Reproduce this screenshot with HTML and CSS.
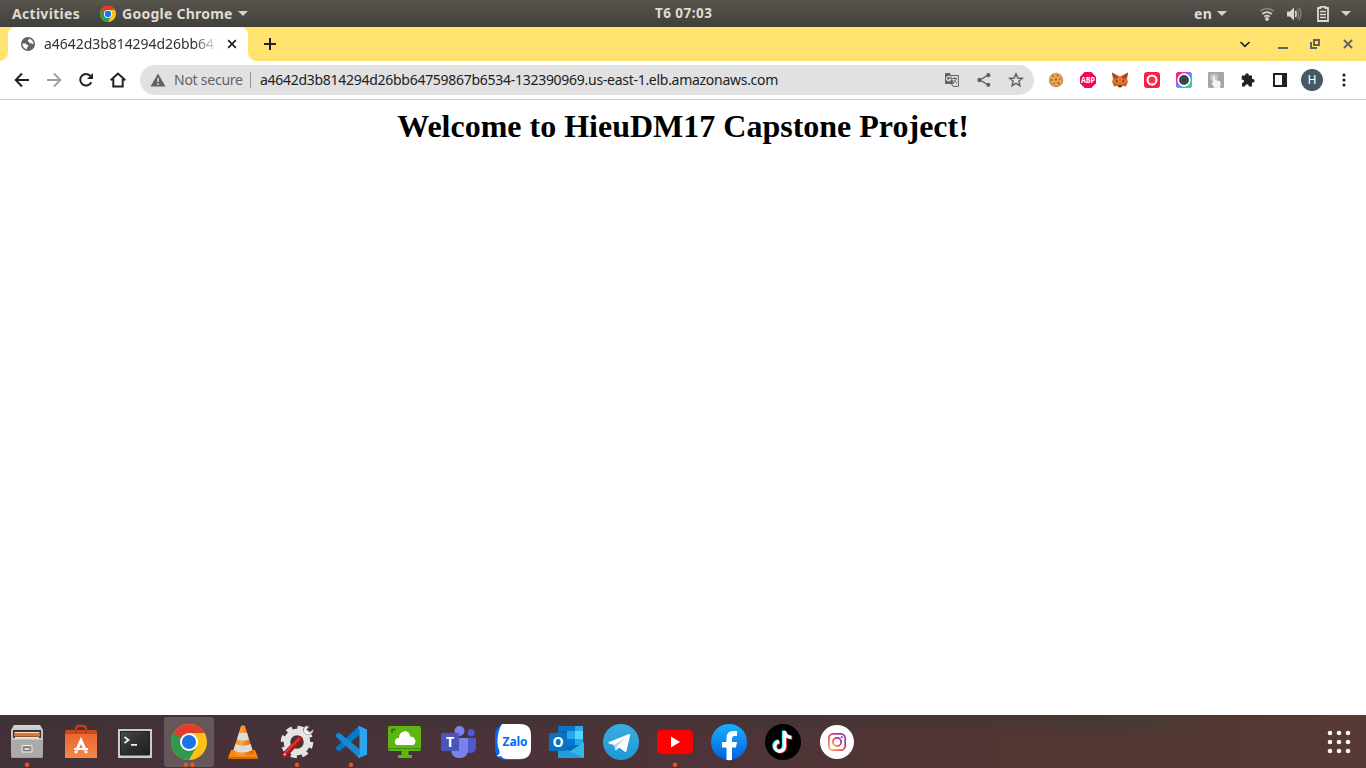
FILE: index.html
```html
<!DOCTYPE html>
<html lang="en">
<head>
<meta charset="utf-8">
<title>Desktop</title>
<link rel="stylesheet" href="styles.css">
</head>
<body>
<svg class="defs" aria-hidden="true">
  <defs>
    <symbol id="chrome" viewBox="0 0 36 36">
      <circle cx="18" cy="18" r="18" fill="#fbc116"/>
      <path d="M18 18 2.4 9A18 18 0 0 0 18 36L25.8 22.5Z" fill="#30994c"/>
      <path d="M2.4 9A18 18 0 0 1 33.6 9H18L10.2 22.5Z" fill="#e33b2e"/>
      <path d="M18 18 2.4 9 10.2 22.5Z" fill="#30994c"/>
      <circle cx="18" cy="18" r="9" fill="#fff"/>
      <circle cx="18" cy="18" r="7.1" fill="#1a73e8"/>
    </symbol>
    <linearGradient id="silver" x2="0" y2="1"><stop stop-color="#d2d2d2"/><stop offset="1" stop-color="#9b9b9b"/></linearGradient>
    <linearGradient id="orange" x2="0" y2="1"><stop stop-color="#e5622a"/><stop offset="1" stop-color="#f4884c"/></linearGradient>
    <linearGradient id="screen" x2="1" y2="1"><stop stop-color="#4b4b4b"/><stop offset=".5" stop-color="#303030"/><stop offset="1" stop-color="#1f1f1f"/></linearGradient>
    <linearGradient id="fb" x2="0" y2="1"><stop stop-color="#19afff"/><stop offset="1" stop-color="#0062e0"/></linearGradient>
    <linearGradient id="tg" x2="0" y2="1"><stop stop-color="#37aee2"/><stop offset="1" stop-color="#2298d4"/></linearGradient>
    <linearGradient id="insta" x1="0" y1="1" x2="1" y2="0"><stop stop-color="#fdb94a"/><stop offset=".45" stop-color="#e23a5c"/><stop offset="1" stop-color="#8134c6"/></linearGradient>
    <linearGradient id="rainbow" x2="1" y2="1"><stop stop-color="#ff2020"/><stop offset=".3" stop-color="#f02bd0"/><stop offset=".6" stop-color="#20b8ff"/><stop offset="1" stop-color="#45e04a"/></linearGradient>
    <linearGradient id="cone" x2="1"><stop stop-color="#f58a1c"/><stop offset=".4" stop-color="#ffa044"/><stop offset="1" stop-color="#d75f00"/></linearGradient>
  </defs>
</svg>

<header class="topbar">
  <span class="activities">Activities</span>
  <svg class="top-chrome"><use href="#chrome"/></svg>
  <span class="app-name">Google Chrome</span>
  <i class="caret"></i>
  <span class="clock">T6 07:03</span>
  <div class="tray">
    <span class="lang">en</span><i class="caret"></i>
    <svg class="wifi" width="16" height="16" viewBox="0 0 16 16" fill="none" stroke-width="1.7"><path d="M1.3 5.2Q8 .1 14.7 5.2" stroke="#85827c"/><path d="M3.3 8Q8 4.4 12.7 8M5.2 10.7Q8 8.5 10.8 10.7" stroke="#d5d3cf"/><circle cx="8" cy="13" r="1.9" fill="#d5d3cf"/></svg>
    <svg class="sound" width="16" height="16" viewBox="0 0 16 16" fill="none"><path d="M1 5.5H4L8 1.5V14.5L4 10.5H1Z" fill="#dad8d4"/><path d="M9.3 5Q11 8 9.3 11" stroke="#dad8d4" stroke-width="1.6"/><path d="M11 3Q14 8 11 13M13 1.6Q17 8 13 14.4" stroke="#85827c" stroke-width="1.4"/></svg>
    <svg class="battery" width="12" height="16" viewBox="0 0 12 16"><path d="M3.5 2V.8H8.500V2H11V15H1V2Z" fill="none" stroke="#dad8d4" stroke-width="1.8"/><path d="M3 5.5H9M3 8.500H9M3 11.500H9" stroke="#dad8d4" stroke-width="1.6"/></svg>
    <i class="caret"></i>
  </div>
</header>

<section class="tabstrip">
  <div class="tab">
    <svg class="globe" width="14" height="14" viewBox="0 0 14 14"><circle cx="7" cy="7" r="7" fill="#5f6368"/><path d="M1.500 6.500H4.500C5.500 6.500 5.200 8 6.500 8C8 8 7.700 9.500 6.500 9.800C6 10 6.500 11 5.800 12.300C3 11.700 1.300 9.500 1.500 6.500ZM8.300 1.700C7.800 3 6.700 2.600 6.800 4C7 5 8.300 4.500 8.300 5.500C8.500 6.500 9.500 6.300 10.300 6.300C11 6.400 11.500 7.300 12.500 7.300C12.500 4.300 10.800 2.300 8.300 1.700Z" fill="#fff"/></svg>
    <span class="tab-title">a4642d3b814294d26bb647</span>
    <svg class="close" width="10" height="10" viewBox="0 0 10 10"><path d="M1.200 1.200 8.800 8.800M8.800 1.200 1.200 8.800" stroke="#202124" stroke-width="1.7"/></svg>
  </div>
  <svg class="newtab" width="12" height="12" viewBox="0 0 12 12"><path d="M6 0V12M0 6H12" stroke="#202124" stroke-width="2"/></svg>
  <div class="window-controls">
    <svg width="12" height="12" viewBox="0 0 12 12"><path d="M1.500 4 6 8.300 10.500 4" fill="none" stroke="#202124" stroke-width="1.7"/></svg>
    <svg width="12" height="12" viewBox="0 0 12 12"><path d="M1 10H11" stroke="#5f6368" stroke-width="2"/></svg>
    <svg width="12" height="12" viewBox="0 0 12 12"><path d="M5 2H10V7H5ZM2 4V10H8" fill="none" stroke="#5f6368" stroke-width="2"/></svg>
    <svg width="12" height="12" viewBox="0 0 12 12"><path d="M2 2 10 10M10 2 2 10" stroke="#5f6368" stroke-width="1.900"/></svg>
  </div>
</section>

<nav class="toolbar">
  <div class="nav-buttons">
    <svg viewBox="0 0 16 16"><path d="M15 8H2M8 1.500 1.700 8 8 14.500" fill="none" stroke="#202124" stroke-width="2"/></svg>
    <svg viewBox="0 0 16 16"><path d="M1 8H14M8 1.500 14.300 8 8 14.500" fill="none" stroke="#9d9d9d" stroke-width="1.900"/></svg>
    <svg viewBox="0 0 16 16"><path d="M13.300 10.200A5.800 5.800 0 1 1 12.500 4" fill="none" stroke="#202124" stroke-width="2"/><path d="M15 1V7H9Z" fill="#202124"/></svg>
    <svg viewBox="0 0 16 16"><path d="M.7 8.300 8 1.500 15.300 8.300M3.300 7V14.500H12.700V7" fill="none" stroke="#202124" stroke-width="2"/></svg>
  </div>
  <div class="omnibox">
    <svg class="warn" width="16" height="14" viewBox="0 0 16 14"><path d="M8 .5 15.500 13.500H.5Z" fill="#5f6368"/><path d="M8 5V9M8 10.300V12" stroke="#e1e1e1" stroke-width="1.500"/></svg>
    <span class="secure">Not secure</span>
    <span class="divider"></span>
    <span class="url">a4642d3b814294d26bb64759867b6534-132390969.us-east-1.elb.amazonaws.com</span>
    <div class="page-actions">
      <svg viewBox="0 0 16 16"><path d="M1.500 1H6L10 12H1.500Q1 12 1 11.500V1.500Q1 1 1.500 1Z" fill="#5f6368"/><path d="M6.700 3.500H14.400V14.400H9L7.500 12" fill="none" stroke="#5f6368"/><path d="M6.700 5.500A2.200 2.200 0 1 0 6.800 7.300H4.700" fill="none" stroke="#e1e1e1" stroke-width="1.200"/><path d="M8.300 6.500H13M10.700 5V6.500M12.300 6.500Q11.800 9 9.500 10.500M9.600 8Q11 10 13 11.200" fill="none" stroke="#5f6368"/></svg>
      <svg viewBox="0 0 16 16"><path d="M12.300 3.200 3.700 8 12.300 12.800" fill="none" stroke="#5f6368" stroke-width="1.400"/><g fill="#5f6368"><circle cx="12.300" cy="3.200" r="2.100"/><circle cx="3.500" cy="8" r="2.200"/><circle cx="12.300" cy="12.800" r="2.100"/></g></svg>
      <svg viewBox="0 0 16 16"><path d="M8 1.900 9.800 6 14.200 6.400 10.900 9.300 11.900 13.700 8 11.400 4.100 13.700 5.100 9.300 1.800 6.400 6.200 6Z" fill="none" stroke="#5f6368" stroke-width="1.500"/></svg>
    </div>
  </div>
  <div class="extensions">
    <svg viewBox="0 0 16 16"><circle cx="8" cy="8" r="7.200" fill="#c77a35"/><circle cx="8" cy="7.300" r="6.600" fill="#e3a35a"/><g fill="#925021"><circle cx="5" cy="4" r=".8"/><circle cx="9.500" cy="3.500" r=".8"/><circle cx="3.500" cy="8" r=".9"/><circle cx="8" cy="7.500" r=".9"/><circle cx="12" cy="7" r=".8"/><circle cx="6" cy="11.500" r=".8"/><circle cx="10.500" cy="11" r=".9"/></g></svg>
    <svg viewBox="0 0 16 16"><path d="M4.700 0H11.300L16 4.700V11.300L11.300 16H4.700L0 11.300V4.700Z" fill="#f5084f"/><text class="abp" x="8" y="10.900" text-anchor="middle" textLength="14" lengthAdjust="spacingAndGlyphs">ABP</text></svg>
    <svg viewBox="0 0 16 16"><path d="M0 .5 6.300 4H9.700L16 .5 15 6 16 10 14 14.500 10.300 14 9.500 15.500H6.500L5.700 14 2 14.500 0 10 1 6Z" fill="#e6762b"/><path d="M0 .5 6.300 4 5 7 1 6ZM16 .5 9.700 4 11 7 15 6Z" fill="#a6492b"/><path d="M3.500 7.500 6.500 9.500H4.300ZM12.500 7.500 9.500 9.500H11.700ZM6.500 13H9.500V15H6.500Z" fill="#38302c"/><path d="M1 10 5 10.500 6 13.500 2 14.300ZM15 10 11 10.500 10 13.500 14 14.300Z" fill="#cf6222"/></svg>
    <svg viewBox="0 0 16 16"><rect width="16" height="16" rx="3" fill="#fb1e3e"/><circle cx="8" cy="8" r="4.500" fill="#fb3149" stroke="#fff" stroke-width="2"/></svg>
    <svg viewBox="0 0 16 16"><rect width="16" height="16" rx="2.500" fill="url(#rainbow)"/><circle cx="8" cy="8" r="5.800" fill="#39404d" stroke="#fff" stroke-width="1.700"/><circle cx="8" cy="8" r="3" fill="#343c46" stroke="#4b535f"/></svg>
    <svg viewBox="0 0 16 16"><rect width="16" height="16" rx="1" fill="#a6a6a6"/><circle cx="6" cy="5.500" r="4" fill="#c6c6c6"/><path d="M5 4.500Q6 3 7 4.500V8L11.500 9Q13 9.500 12.700 11L12 16H6.500L3.500 11.500Q3 10 5 10.700Z" fill="#f4f4f4"/></svg>
    <svg viewBox="0 0 16 16"><path d="M2 3.500H5.300C4.700 .5 9.300 .5 8.700 3.500H12V7C15.500 6.300 15.500 11 12 10.500V14.500H8.800C9 11.500 5 11.500 5.200 14.500H2V11C4.800 11 4.800 7.300 1.500 7.500Z" fill="#202124"/></svg>
    <svg viewBox="0 0 16 16"><path d="M2 2H14V14H2Z" fill="none" stroke="#202124" stroke-width="2"/><path d="M10 1H15V15H10Z" fill="#202124"/></svg>
  </div>
  <span class="avatar">H</span>
  <svg class="kebab" width="4" height="14" viewBox="0 0 4 14" fill="#202124"><circle cx="2" cy="2" r="1.600"/><circle cx="2" cy="7" r="1.600"/><circle cx="2" cy="12" r="1.600"/></svg>
</nav>

<main class="page"><h1>Welcome to HieuDM17 Capstone Project!</h1></main>

<footer class="dock">
  <svg class="app" viewBox="0 0 50 50"><path d="M12 8H38L41 13V40Q41 41 39 41H11Q9 41 9 40V13Z" fill="url(#silver)"/><path d="M11 13H39V21H11Z" fill="#363636"/><path d="M12.500 15H37.500V16.500H12.500Z" fill="#eee5db"/><path d="M12 17H38V19.500H12Z" fill="#e87526"/><path d="M13 20H37V21.500H13Z" fill="#f5e3d2"/><path d="M10 22H40V40H10Z" fill="#aaa"/><path d="M10 22H40" stroke="#ddd"/><path d="M20 28.500H30V35H20Z" fill="#999" stroke="#e8e8e8"/><path d="M22 30.500H28V33.500H22Z" fill="#ddd" stroke="#777"/><circle class="dot" cx="25" cy="47.700" r="2.200"/></svg>
  <svg class="app" viewBox="0 0 50 50"><path d="M10 13H40L41 17V41H9V17Z" fill="url(#orange)"/><path d="M10 13H40L41 17H9Z" fill="#ce481e"/><path d="M20 17V12Q20 9 23 9H27Q30 9 30 12V17" fill="none" stroke="#b83f20" stroke-width="2.300"/><path d="M19.500 36 25 23.500 30.500 36" fill="none" stroke="#fff" stroke-width="3"/><path d="M18 32H32" stroke="#fff" stroke-width="2"/><path d="M18.500 33.700H31.500" stroke="#e98457" stroke-width=".7"/></svg>
  <svg class="app" viewBox="0 0 50 50"><path d="M8 12H42V41H8Z" fill="#ccc"/><path d="M10.500 14.500H39.500V38H10.500Z" fill="url(#screen)" stroke="#222"/><path d="M14.500 20 18.500 23 14.500 26M21 27.800H27" fill="none" stroke="#f1f1f1" stroke-width="1.800"/></svg>
  <svg class="app selected" viewBox="0 0 50 50"><use href="#chrome" x="7" y="7" width="36" height="36"/><circle class="dot" cx="21.700" cy="47.700" r="2.200"/><circle class="dot" cx="28.400" cy="47.700" r="2.200"/></svg>
  <svg class="app" viewBox="0 0 50 50"><path d="M13 33H37L40 41Q40 42 39 42H11Q10 42 10 41Z" fill="#f58a0c"/><path d="M10 40H40V42H10Z" fill="#d66b00"/><path d="M23 9Q25 7.500 27 9L35.500 36Q25 42 14.500 36Z" fill="url(#cone)"/><path d="M21 16H29L31 22.500Q25 25 19 22.500ZM17.500 27Q25 30.500 32.500 27L34.500 33Q25 38 15.500 33Z" fill="#dcdcdc"/></svg>
  <svg class="app" viewBox="0 0 50 50"><circle cx="25" cy="25" r="14.300" fill="none" stroke="#e4e4e2" stroke-width="4" stroke-dasharray="6 5.231"/><circle cx="25" cy="25" r="10" fill="none" stroke="#e4e4e2" stroke-width="6.500"/><path d="M29.500 20.500 35.500 14.500" stroke="#e8e8e8" stroke-width="4.500"/><path d="M33.500 9Q30.500 12 32 16Q36.500 20 41 15V12.500L38 15.500 34.500 12.500 37 9.500Z" fill="#f2f2f2" stroke="#888" stroke-width=".6"/><path d="M12.500 38 28 22" stroke="#a81818" stroke-width="5.500" stroke-linecap="round"/><path d="M13.500 35.500 27 21.500" stroke="#d63a38" stroke-width="2.300" stroke-linecap="round"/><circle cx="12.700" cy="37.500" r="1.100" fill="#eee"/><circle class="dot" cx="25" cy="47.700" r="2.200"/></svg>
  <svg class="app" viewBox="0 0 50 50"><path d="M33 9 9.800 30.500V32L12 34 14 33.700 34 17.500Z" fill="#007acc"/><path d="M33 41 9.800 19.500V18L12 16 14 16.300 34 32.500Z" fill="#1589d1"/><path d="M33 9 41 12.500V37.500L33 41 32 39 33.500 37V13L32 11Z" fill="#2ca4ee"/><circle class="dot" cx="25" cy="47.700" r="2.200"/></svg>
  <svg class="app" viewBox="0 0 50 50"><path d="M10 9H39Q41 9 41 11V32Q41 34 39 34H10Q8 34 8 32V11Q8 9 10 9Z" fill="#5eb613"/><path d="M21.500 34H28.500V38H32V41H18V38H21.500Z" fill="#5eb613"/><path d="M8 31.500H41" stroke="#3f8910"/><path d="M12 16V12.500H15.500" fill="none" stroke="#315b17" stroke-width="1.400"/><path d="M17 28C13 26 15 20.500 19 21C19 12.500 30 12 30 19.500C35 19 37.500 25 33.500 28Z" fill="#fff"/></svg>
  <svg class="app" viewBox="0 0 50 50"><circle cx="37.200" cy="15.800" r="3.700" fill="#5059c9"/><path d="M30 21H42V30Q42 36 36 36H30Z" fill="#5059c9"/><circle cx="25.500" cy="14" r="5" fill="#7b83eb"/><path d="M17 21H34V32Q34 41 25.500 41Q17 41 17 32Z" fill="#7b83eb"/><path d="M17 21H25V34H18Z" fill="#5b63be"/><rect x="7" y="16" width="18" height="18" rx="1.500" fill="#4b53bc"/><text class="letter teams" x="16" y="30">T</text></svg>
  <svg class="app" viewBox="0 0 50 50"><rect x="7" y="7" width="35" height="36" rx="11" fill="#0068ff"/><path d="M20 7H32Q43 7 43 18V31Q43 42 32 42H19Q15 42 13 39Q10 40 8.500 38.500Q12 38 11.500 34Q9 29 9.500 23Q10 13 14 7Z" fill="#fff"/><text class="zalo" x="27" y="28.500">Zalo</text></svg>
  <svg class="app" viewBox="0 0 50 50"><path d="M16 9H41V34H16Z" fill="#0a66b5"/><path d="M17 9H33V14H17Z" fill="#0b75c5"/><path d="M25 14H33V22H25Z" fill="#28a8ea"/><path d="M33 9H41V14H33Z" fill="#32a9e7"/><path d="M33 14H41V22H33Z" fill="#50d9ff"/><path d="M25 22H33V29H25Z" fill="#0078d4"/><path d="M33 22H41V28H33Z" fill="#28a8ea"/><path d="M16 28 42 41H16Z" fill="#1584d0"/><path d="M42 25V41H18Z" fill="#35b5ed"/><path d="M16 29 42 41H18Q16 41 16 39Z" fill="#249bda"/><rect x="7" y="16" width="18" height="18" rx="1.500" fill="#0872c4"/><text class="letter outlook" x="16" y="30">O</text></svg>
  <svg class="app" viewBox="0 0 50 50"><circle cx="25" cy="25" r="18" fill="url(#tg)"/><path d="M12.500 25.200 33 17Q34.500 16.500 34 18.700L30.500 34Q30 35.500 28.500 34.500L23 30.500 20.500 33Q19.500 34 19.300 32.500L18 28 13 26.400Q11.500 25.800 12.500 25.200Z" fill="#fff"/><path d="M18 28 30.500 20 21.200 29 20 33Z" fill="#b7d8e9"/></svg>
  <svg class="app" viewBox="0 0 50 50"><rect x="7" y="12.700" width="36" height="24.500" rx="5" fill="#f00"/><path d="M21 19.500 30 25 21 30.500Z" fill="#fff"/><circle class="dot" cx="25" cy="47.700" r="2.200"/></svg>
  <svg class="app" viewBox="0 0 50 50"><circle cx="25" cy="25" r="18" fill="url(#fb)"/><path d="M22.500 43V30.500H18V25H22.500V21Q22.500 14 29 14H33V19H30.500Q28 19 28 21.500V25H33L32 30.500H28V43Q25 43.300 22.500 43Z" fill="#fff"/></svg>
  <svg class="app" viewBox="0 0 50 50"><circle cx="25" cy="25" r="18" fill="#000"/><g fill="none" stroke-width="3.300"><path d="M26 14V29.500A4.800 4.800 0 1 1 20.700 24.500M26 14Q27 20 33 20.300" stroke="#25f4ee" transform="translate(-.5 -.5)"/><path d="M26 14V29.500A4.800 4.800 0 1 1 20.700 24.500M26 14Q27 20 33 20.300" stroke="#fe2c55" transform="translate(1.300 .8)"/><path d="M26 14V29.500A4.800 4.800 0 1 1 20.700 24.500M26 14Q27 20 33 20.300" stroke="#fff" transform="translate(.4 .2)"/></g></svg>
  <svg class="app" viewBox="0 0 50 50"><circle cx="25" cy="25" r="17" fill="#fff"/><g fill="none" stroke="url(#insta)" stroke-width="1.700"><rect x="16.800" y="16.800" width="16.400" height="16.400" rx="4.500"/><circle cx="25" cy="25" r="4.100"/></g><circle cx="29.800" cy="20.200" r="1.100" fill="#a63abf"/></svg>
  <svg class="app launcher" viewBox="0 0 50 50" fill="#f7f5f3"><circle cx="16" cy="16" r="2.300"/><circle cx="25" cy="16" r="2.300"/><circle cx="34" cy="16" r="2.300"/><circle cx="16" cy="25" r="2.300"/><circle cx="25" cy="25" r="2.300"/><circle cx="34" cy="25" r="2.300"/><circle cx="16" cy="34" r="2.300"/><circle cx="25" cy="34" r="2.300"/><circle cx="34" cy="34" r="2.300"/></svg>
</footer>
</body>
</html>
```
FILE: styles.css
```css
* { box-sizing: border-box; }
body { margin: 0; width: 1366px; height: 768px; overflow: hidden; display: flex; flex-direction: column; background: #fff; font-family: "Noto Sans", "Open Sans", sans-serif; }
svg { display: block; flex: none; }
.defs { position: absolute; width: 0; height: 0; }
span { white-space: nowrap; }

.topbar { height: 27px; flex: none; display: flex; align-items: center; padding-left: 12px; background: linear-gradient(#58554d, #403f3a); color: #dfdbd2; font-size: 14px; font-weight: 700; line-height: 27px; }
.activities { width: 88px; letter-spacing: .3px; }
.top-chrome { width: 16px; height: 16px; margin-right: 6px; }
.app-name { width: 116px; letter-spacing: .25px; }
.caret { flex: none; border: 5px solid transparent; border-top-color: #d5d3cf; border-bottom: 0; }
.clock { width: 60px; margin-left: 407px; font-size: 13.5px; letter-spacing: .45px; }
.tray { flex: 1; display: flex; align-items: center; padding-left: 479px; }
.lang { width: 23px; flex: none; letter-spacing: .3px; }
.wifi { margin-left: 32px; }
.sound { margin-left: 11px; }
.battery { margin: 0 12px 0 15px; }

.tabstrip { height: 34px; flex: none; display: flex; align-items: center; background: #ffe36e; }
.tab { width: 240px; height: 34px; margin-left: 8px; padding: 0 11px 0 13px; display: flex; align-items: center; background: #fff; border-radius: 8px 8px 0 0; position: relative; }
.tab::before, .tab::after { content: ""; position: absolute; bottom: 0; width: 8px; height: 8px; }
.tab::before { left: -8px; background: radial-gradient(circle at 0 0, transparent 7.500px, #fff 8px); }
.tab::after { right: -8px; background: radial-gradient(circle at 100% 0, transparent 7.500px, #fff 8px); }
.tab-title { width: 174px; margin: 0 9px; padding-bottom: 2px; overflow: hidden; font-size: 14px; letter-spacing: -.05px; color: #303134; -webkit-mask-image: linear-gradient(90deg, #000 150px, transparent); mask-image: linear-gradient(90deg, #000 150px, transparent); }
.newtab { margin-left: 16px; }
.window-controls { margin-left: auto; padding-right: 12px; display: flex; gap: 20px; }
.window-controls svg:first-child { margin-right: 6px; }
.window-controls svg:nth-child(-n+3) { transform: translateX(-1px); }

.toolbar { height: 39px; flex: none; display: flex; align-items: center; padding: 0 0 1px 14px; border-bottom: 1px solid #cbcbcb; background: #fff; }
.nav-buttons { display: flex; gap: 16px; }
.nav-buttons svg, .page-actions svg, .extensions svg { width: 16px; height: 16px; }
.omnibox { width: 894px; height: 30px; margin-left: 14px; padding: 0 10px; border-radius: 15px; display: flex; align-items: center; background: #e1e1e1; color: #202124; font-size: 14px; }
.warn { margin-right: 8px; }
.secure { width: 76px; color: #5f6368; letter-spacing: -.25px; }
.divider { width: 1px; height: 16px; background: #8e9093; margin-right: 9px; }
.url { letter-spacing: -.28px; }
.page-actions { margin-left: auto; display: flex; gap: 16px; }
.extensions { margin-left: 14px; display: flex; gap: 16px; }
.abp { font: 700 8px "Open Sans", sans-serif; fill: #fff; }
.avatar { width: 22px; height: 22px; margin: 0 18px 0 13px; border-radius: 50%; background: #455a64; color: #fff; font: 12px/22px Roboto, sans-serif; text-align: center; }
.kebab { margin-left: 1px; }

.page { flex: 1; }
.page h1 { margin: 8px 0 0; font: 700 32px/37px "Liberation Serif", serif; color: #000; text-align: center; }

.dock { height: 53px; flex: none; display: flex; gap: 4px; padding: 2px; background: radial-gradient(ellipse 110px 28px at 1130px 0, #453b35, transparent), linear-gradient(180deg, rgba(55, 53, 50, .5), transparent 40%) 0 0 / 1150px 100% no-repeat, linear-gradient(90deg, #433138 0, #48323a 350px, #4e3437 750px, #553731 1180px, #573a34); }
.app { width: 50px; height: 50px; }
.selected { background: #655659; border-radius: 3px; }
.dot { fill: #e95420; }
.launcher { margin-left: auto; }
.letter { font: 700 14px "Open Sans", sans-serif; fill: #fff; text-anchor: middle; }
.zalo { font: 700 12px "Open Sans", sans-serif; fill: #0068ff; text-anchor: middle; letter-spacing: -.1px; }
```
